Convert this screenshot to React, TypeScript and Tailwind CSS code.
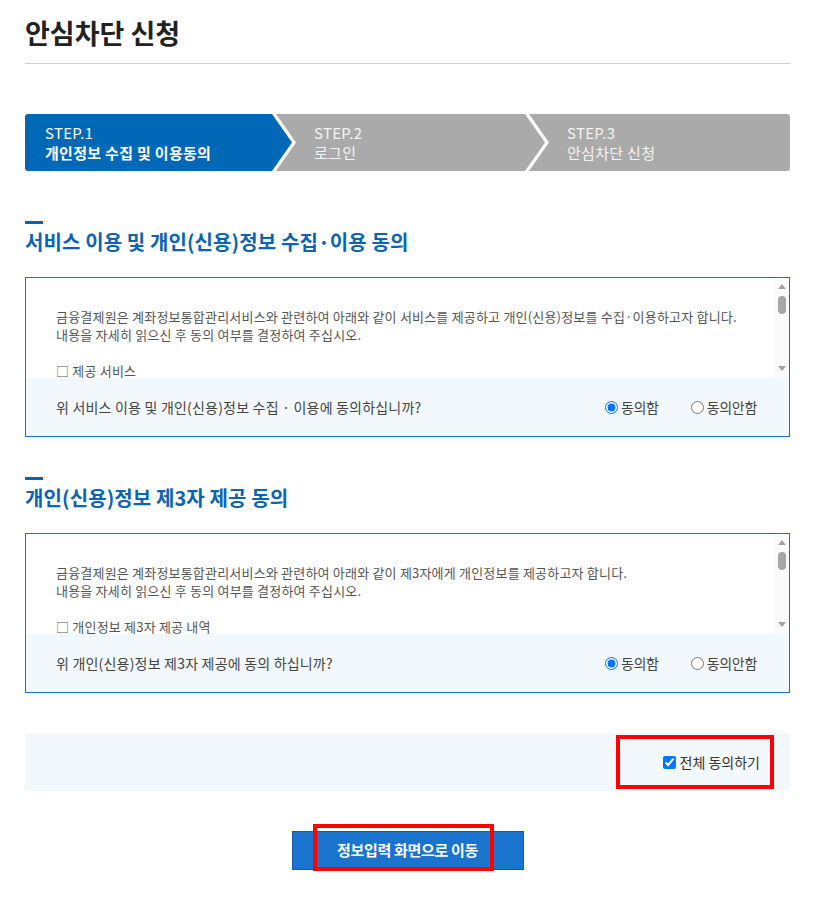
const font = "font-['Malgun_Gothic','Noto_Sans_CJK_KR',sans-serif]";

const sections = [
  {
    title: "서비스 이용 및 개인(신용)정보 수집·이용 동의",
    intro: "금융결제원은 계좌정보통합관리서비스와 관련하여 아래와 같이 서비스를 제공하고 개인(신용)정보를 수집·이용하고자 합니다.",
    item: "□ 제공 서비스",
    detail: [
      "- 계좌정보통합관리서비스(어카운트인포) 내 안심차단 신청",
      "- 본인 명의 계좌의 비대면 개설 차단 서비스",
    ],
    question: "위 서비스 이용 및 개인(신용)정보 수집 · 이용에 동의하십니까?",
    name: "agree1",
  },
  {
    title: "개인(신용)정보 제3자 제공 동의",
    intro: "금융결제원은 계좌정보통합관리서비스와 관련하여 아래와 같이 제3자에게 개인정보를 제공하고자 합니다.",
    item: "□ 개인정보 제3자 제공 내역",
    detail: [
      "- 제공받는 자: 은행, 증권사, 상호금융 등 참가기관",
      "- 제공 목적: 안심차단 서비스 등록 및 운영",
    ],
    question: "위 개인(신용)정보 제3자 제공에 동의 하십니까?",
    name: "agree2",
  },
];

const Steps = () => (
  <div className="mt-[50px] flex h-[57px] text-[15px] leading-[20px] tracking-[0.3px] text-white">
    <div className="flex w-[267px] flex-col justify-center rounded-l-[3px] bg-[#0068b7] pl-[20px] [clip-path:polygon(0_0,calc(100%_-_20px)_0,100%_50%,calc(100%_-_20px)_100%,0_100%)]">
      <span>STEP.1</span>
      <span className="font-bold">개인정보 수집 및 이용동의</span>
    </div>
    <div className="ml-[-16px] flex w-[269px] flex-col justify-center bg-[#aaaaaa] pl-[38px] text-[#f4f4f4] [clip-path:polygon(0_0,calc(100%_-_20px)_0,100%_50%,calc(100%_-_20px)_100%,0_100%,20px_50%)]">
      <span>STEP.2</span>
      <span>로그인</span>
    </div>
    <div className="ml-[-16px] flex flex-1 flex-col justify-center rounded-r-[3px] bg-[#aaaaaa] pl-[38px] text-[#f4f4f4] [clip-path:polygon(0_0,100%_0,100%_100%,0_100%,20px_50%)]">
      <span>STEP.3</span>
      <span>안심차단 신청</span>
    </div>
  </div>
);

const ScrollBar = () => (
  <div className="flex w-[15px] shrink-0 flex-col items-center bg-[#fafafa] pb-[7px] pt-[6px]">
    <svg width="8" height="5" viewBox="0 0 8 5">
      <path d="M0 5 L4 0 L8 5 Z" fill="#a3a3a3" />
    </svg>
    <div className="mt-[7px] h-[18px] w-[8px] rounded-full bg-[#a6a6a6]" />
    <div className="flex-1" />
    <svg width="8" height="5" viewBox="0 0 8 5">
      <path d="M0 0 L8 0 L4 5 Z" fill="#a3a3a3" />
    </svg>
  </div>
);

const AgreeBox = ({ s, top }: { s: (typeof sections)[number]; top: string }) => (
  <section className={top}>
    <div className="h-[3px] w-[18px] bg-[#0b64b0]" />
    <h2 className="mt-[4px] text-[20px] font-bold leading-[28px] tracking-[0.1px] text-[#0b64b0]">{s.title}</h2>
    <div className="mt-[21px] border border-[#1e6fb8]">
      <div className="flex h-[100px] bg-white">
        <div className="flex-1 overflow-hidden pl-[30px] pr-[20px] pt-[30px] text-[13px] leading-[18px] tracking-[0.2px] text-[#555]">
          <p>{s.intro}</p>
          <p>내용을 자세히 읽으신 후 동의 여부를 결정하여 주십시오.</p>
          <p className="mt-[18px]">{s.item}</p>
          {s.detail.map((d) => (
            <p key={d}>{d}</p>
          ))}
        </div>
        <ScrollBar />
      </div>
      <div className="flex h-[58px] items-center justify-between bg-[#f2f8fc] pl-[30px] pr-[32px] text-[14px] tracking-[0.2px] text-[#444]">
        <span>{s.question}</span>
        <div className="flex items-center gap-[32px] tracking-[-0.3px]">
          <label className="flex items-center gap-[3px]">
            <input type="radio" name={s.name} defaultChecked className="m-0 h-[13px] w-[13px]" />
            동의함
          </label>
          <label className="flex items-center gap-[3px]">
            <input type="radio" name={s.name} className="m-0 h-[13px] w-[13px]" />
            동의안함
          </label>
        </div>
      </div>
    </div>
  </section>
);

export default function App() {
  return (
    <div className={`${font} w-[827px] bg-white pb-[28px]`}>
      <div className="ml-[25px] w-[765px]">
        <div className="border-b border-[#cccccc] pb-[13px] pt-[16px]">
          <h1 className="text-[27px] font-bold leading-[34px] text-[#222]">안심차단 신청</h1>
        </div>

        <Steps />

        <AgreeBox s={sections[0]} top="mt-[50px]" />
        <AgreeBox s={sections[1]} top="mt-[40px]" />

        <div className="mt-[40px] flex h-[58px] items-center justify-end bg-[#f3f8fc]">
          <label className="mr-[16px] flex h-[54px] items-center gap-[4px] border-4 border-[#ff0000] pl-[43px] pr-[10px] text-[14px] text-[#333]">
            <input type="checkbox" defaultChecked className="m-0 h-[13px] w-[13px]" />
            전체 동의하기
          </label>
        </div>

        <div className="mt-[40px] flex justify-center">
          <div className="relative">
            <button className="h-[39px] w-[232px] border border-[#0f5fae] bg-[#1a74cd] text-[15px] font-bold tracking-[-0.3px] text-white">
              정보입력 화면으로 이동
            </button>
            <div className="pointer-events-none absolute left-[21px] top-[-7px] h-[47px] w-[181px] border-4 border-[#ff0000]" />
          </div>
        </div>
      </div>
    </div>
  );
}
